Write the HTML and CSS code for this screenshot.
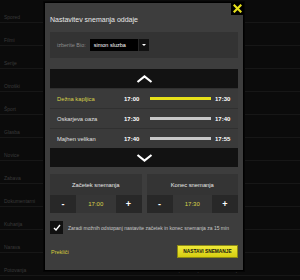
FILE: index.html
```html
<!DOCTYPE html>
<html lang="sl">
<head>
  <meta charset="UTF-8" />
  <meta name="viewport" content="width=device-width, initial-scale=1.0" />
  <title>Nastavitev snemanja oddaje</title>
  <link rel="stylesheet" href="styles.css">
</head>
<body>
  <!-- page behind the dialog -->
  <ul class="bg-list">
    <li><span>Spored</span></li>
    <li><span>Filmi</span></li>
    <li><span>Serije</span></li>
    <li><span>Otroški</span></li>
    <li><span>Šport</span></li>
    <li><span>Glasba</span></li>
    <li><span>Novice</span></li>
    <li><span>Zabava</span></li>
    <li><span>Dokumentarni</span></li>
    <li><span>Kuharija</span></li>
    <li><span>Narava</span></li>
    <li><span>Potovanja</span><span>20:10 | Prikaži podrobnosti oddaje</span></li>
  </ul>

  <div class="modal">
    <a class="close" href="#">
      <svg width="9" height="9" viewBox="0 0 9 9"><path d="M1.5 1.5 7.5 7.5 M7.5 1.5 1.5 7.5" stroke="#e6e01c" stroke-width="2.2" stroke-linecap="square"/></svg>
    </a>

    <h1>Nastavitev snemanja oddaje</h1>

    <div class="channel">
      <span class="channel-label">izberite Bio:</span>
      <div class="select">
        <span class="select-text">simon sluzba</span>
        <span class="select-arrow"></span>
      </div>
    </div>

    <div class="programs">
      <div class="scroll">
        <svg width="17" height="8" viewBox="0 0 17 8"><polyline points="1.5,7 8.5,1.5 15.5,7" fill="none" stroke="#fff" stroke-width="2.2"/></svg>
      </div>
      <div class="row active">
        <span class="title">Dežna kapljica</span>
        <b>17:00</b>
        <span class="bar"></span>
        <b class="end">17:30</b>
      </div>
      <div class="row">
        <span class="title">Oskarjeva oaza</span>
        <b>17:30</b>
        <span class="bar"></span>
        <b class="end">17:40</b>
      </div>
      <div class="row">
        <span class="title">Majhen velikan</span>
        <b>17:40</b>
        <span class="bar"></span>
        <b class="end">17:55</b>
      </div>
      <div class="scroll">
        <svg width="17" height="8" viewBox="0 0 17 8"><polyline points="1.5,1 8.5,6.5 15.5,1" fill="none" stroke="#fff" stroke-width="2.2"/></svg>
      </div>
    </div>

    <div class="times">
      <section class="time-box">
        <h2>Začetek snemanja</h2>
        <div class="stepper">
          <button>-</button>
          <span class="value">17:00</span>
          <button>+</button>
        </div>
      </section>
      <section class="time-box">
        <h2>Konec snemanja</h2>
        <div class="stepper">
          <button>-</button>
          <span class="value">17:30</span>
          <button>+</button>
        </div>
      </section>
    </div>

    <label class="check">
      <span class="box">
        <svg width="8" height="7" viewBox="0 0 8 7"><polyline points="1,4 3,6 7,1" fill="none" stroke="#fff" stroke-width="1.4"/></svg>
      </span>
      Zaradi možnih odstopanj nastavite začetek in konec snemanja za 15 min
    </label>

    <div class="actions">
      <a class="cancel" href="#">Prekliči</a>
      <button class="submit">NASTAVI SNEMANJE</button>
    </div>
  </div>
</body>
</html>
```

FILE: styles.css
```css
* { box-sizing: border-box; }
body { margin: 0; width: 300px; height: 280px; overflow: hidden; position: relative; background: #0b0b0b; font-family: "Liberation Sans", Arial, sans-serif; }

.bg-list { list-style: none; margin: 0; padding: 0; }
.bg-list li { height: 23px; border-bottom: 1px solid #171717; display: flex; justify-content: space-between; align-items: flex-end; padding: 0 60px 2px 4px; font-size: 5px; color: #3a3a3a; }

.modal { position: absolute; left: 44px; top: 2px; width: 200px; height: 269px; background: #3d3d3d; border: 1px solid #000; box-shadow: 0 0 0 1px #050505; padding: 0 5px; display: flex; flex-direction: column; }
.close { position: absolute; top: -1px; right: -1px; width: 13px; height: 13px; background: #000; display: flex; align-items: center; justify-content: center; }

h1 { margin: 0; height: 29px; padding-top: 5px; line-height: 24px; font-size: 7px; font-weight: normal; color: #e8e8e8; }

.channel { height: 26px; background: #333; display: flex; align-items: center; gap: 4px; padding-left: 7px; }
.channel-label { font-size: 5.5px; color: #8c8c8c; }
.select { width: 59px; height: 12px; background: #000; display: flex; align-items: center; font-size: 5.5px; color: #fff; }
.select-text { flex: 1; padding-left: 4px; }
.select-arrow { width: 11px; height: 12px; background: #111; border-left: 1px solid #262626; display: flex; align-items: center; justify-content: center; }
.select-arrow::after { content: ""; border-left: 2.5px solid transparent; border-right: 2.5px solid transparent; border-top: 2.5px solid #fff; }

.programs { margin-top: 11px; }
.scroll { height: 19px; background: #121212; display: flex; align-items: center; justify-content: center; }
.row { height: 20px; background: #3a3a3a; border-top: 1px solid #303030; display: grid; grid-template-columns: 67px 26px 61px auto; align-items: center; padding-left: 7px; font-size: 5.8px; color: #e0e0e0; }
.row b { font-size: 6px; color: #fff; }
.row .end { padding-left: 4px; }
.bar { height: 3px; background: #c8c8c8; }
.row.active .title { color: #d8d24a; }
.row.active .bar { background: #e8e21a; }

.times { margin-top: 7px; display: grid; grid-template-columns: 1fr 1fr; gap: 5px; }
.time-box { background: #343434; }
.time-box h2 { margin: 0; height: 21px; line-height: 22px; text-align: center; font-size: 5.8px; font-weight: normal; color: #e8e8e8; }
.stepper { display: flex; height: 18px; }
.stepper button { width: 26px; padding: 0; border: none; background: #282828; color: #fff; font-family: inherit; font-size: 9px; font-weight: bold; }
.stepper .value { flex: 1; text-align: center; line-height: 18px; font-size: 6px; color: #d8d24a; background: #363636; }

.check { margin-top: 8px; display: flex; align-items: center; gap: 5px; font-size: 5px; color: #c8c8c8; }
.box { width: 13px; height: 13px; background: #111; display: flex; align-items: center; justify-content: center; }

.actions { margin-top: 11px; display: flex; justify-content: space-between; align-items: center; }
.cancel { font-size: 5.5px; color: #d4cd3a; text-decoration: none; padding-left: 1px; }
.submit { width: 61px; height: 13px; padding: 0; background: linear-gradient(#f0ea3a, #d6cd10); border: 1px solid #8d8a14; font-family: inherit; font-size: 4.8px; font-weight: bold; color: #111; }
```
